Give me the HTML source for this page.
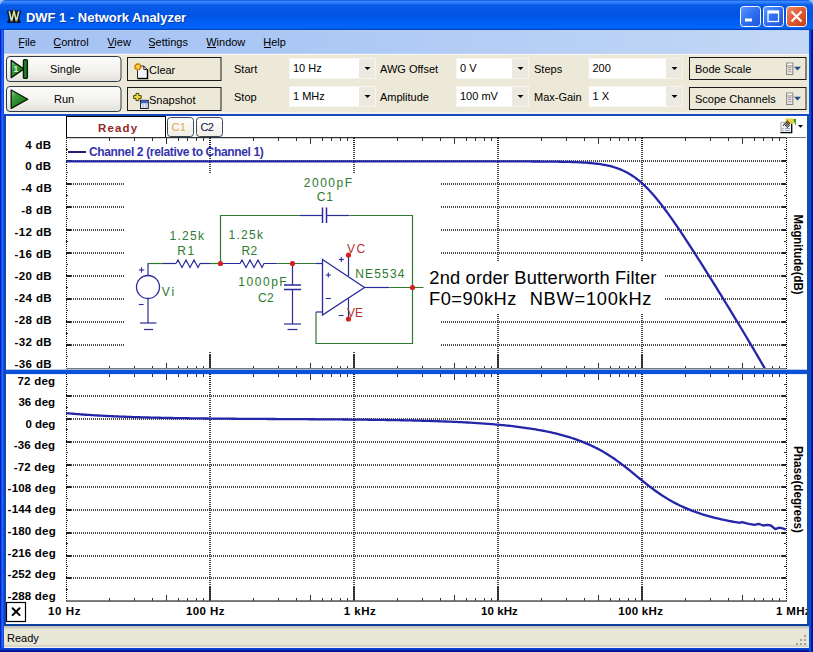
<!DOCTYPE html><html><head><meta charset="utf-8"><style>html,body{margin:0;padding:0;width:813px;height:652px;overflow:hidden;background:#fff}svg{display:block}text{font-family:"Liberation Sans",sans-serif}</style></head><body>
<svg width="813" height="652" viewBox="0 0 813 652">
<defs>
<linearGradient id="tb" x1="0" y1="0" x2="0" y2="30" gradientUnits="userSpaceOnUse">
<stop offset="0" stop-color="#0A46D0"/><stop offset="0.04" stop-color="#3A8EFF"/><stop offset="0.09" stop-color="#2B7CF8"/>
<stop offset="0.17" stop-color="#0A5AE8"/><stop offset="0.5" stop-color="#0054E3"/><stop offset="0.75" stop-color="#005EF4"/>
<stop offset="0.93" stop-color="#0066FA"/><stop offset="0.97" stop-color="#0050D8"/><stop offset="1" stop-color="#003CB8"/></linearGradient>
<linearGradient id="btnb" x1="0" y1="0" x2="1" y2="1"><stop offset="0" stop-color="#5A9AFF"/><stop offset="0.5" stop-color="#2F6FF0"/><stop offset="1" stop-color="#1A55DD"/></linearGradient>
<linearGradient id="btnr" x1="0" y1="0" x2="1" y2="1"><stop offset="0" stop-color="#EE8A6A"/><stop offset="0.5" stop-color="#DE5A34"/><stop offset="1" stop-color="#C23C14"/></linearGradient>
<linearGradient id="pb" x1="0" y1="0" x2="0" y2="1"><stop offset="0" stop-color="#FCFCFB"/><stop offset="0.6" stop-color="#F2F1EC"/><stop offset="1" stop-color="#E2E1DA"/></linearGradient>
<linearGradient id="cb" x1="0" y1="0" x2="0" y2="1"><stop offset="0" stop-color="#FFFFFF"/><stop offset="1" stop-color="#EEEDE6"/></linearGradient>
<linearGradient id="sb" x1="0" y1="626" x2="0" y2="648" gradientUnits="userSpaceOnUse"><stop offset="0" stop-color="#BCBCB4"/><stop offset="0.11" stop-color="#DAD8CA"/><stop offset="0.16" stop-color="#E8E6D6"/><stop offset="0.82" stop-color="#E9E7D8"/><stop offset="0.91" stop-color="#D8D4C4"/><stop offset="1" stop-color="#D8D4C4"/></linearGradient>
<linearGradient id="gr" x1="0" y1="0" x2="1" y2="1"><stop offset="0" stop-color="#9CC89C"/><stop offset="0.3" stop-color="#3A9A3A"/><stop offset="0.65" stop-color="#1C821C"/><stop offset="1" stop-color="#0E5A10"/></linearGradient>
</defs>
<rect x="0" y="0" width="813" height="652" fill="#0A3CCF"/>
<rect x="0" y="30" width="1" height="622" fill="#0020C0"/>
<rect x="1" y="30" width="1" height="622" fill="#1850F0"/>
<rect x="2" y="30" width="1" height="622" fill="#2A64FF"/>
<rect x="3" y="30" width="1" height="622" fill="#0A50D8"/>
<rect x="809" y="30" width="1" height="622" fill="#0A50E0"/>
<rect x="810" y="30" width="1" height="622" fill="#0A48D8"/>
<rect x="811" y="30" width="1" height="622" fill="#0020B0"/>
<rect x="812" y="30" width="1" height="622" fill="#0010A0"/>
<rect x="0" y="648" width="813" height="1" fill="#0C40D0"/>
<rect x="0" y="649" width="813" height="1" fill="#0C3CC8"/>
<rect x="0" y="650" width="813" height="1" fill="#001CA0"/>
<rect x="0" y="651" width="813" height="1" fill="#001490"/>
<rect x="0" y="0" width="813" height="30" fill="url(#tb)"/>
<path d="M0 0 H5 Q1 1 0 5 Z" fill="#9CC0F4"/>
<path d="M813 0 H808 Q812 1 813 5 Z" fill="#9CC0F4"/>
<path d="M9 10.6 L11.6 21.8 L14 10.4 L16.4 21.8 L19 10.6" fill="none" stroke="#0A1430" stroke-width="4.2" stroke-linejoin="miter" stroke-miterlimit="3"/>
<path d="M7 23 H21 L19.5 19 H8.5 Z" fill="#0A1430"/>
<path d="M12.2 12.5 L14 8.4 L15.8 12.5 Z" fill="#0A1430"/>
<path d="M9.2 11.2 L11.6 21.4 L14 11 L16.4 21.4 L18.8 11.2" fill="none" stroke="#D0E2A0" stroke-width="1.6" stroke-linejoin="miter"/>
<path d="M14 9.6 V12" stroke="#B8C890" stroke-width="1"/>
<path d="M10.5 20.5 L13 20.5 M15 20.5 L17.5 20.5" stroke="#6E7E5A" stroke-width="0.8"/>
<text x="26.90" y="22.6" font-size="13" font-weight="bold" fill="#0A1E6A" textLength="160.28" lengthAdjust="spacing" opacity="0.55">DWF 1 - Network Analyzer</text>
<text x="25.90" y="21.7" font-size="13" font-weight="bold" fill="#FFFFFF" textLength="160.28" lengthAdjust="spacing" >DWF 1 - Network Analyzer</text>
<rect x="740.5" y="6.5" width="20" height="20" rx="3" fill="url(#btnb)" stroke="#FFFFFF" stroke-width="1"/>
<rect x="745" y="18.5" width="7" height="3" fill="#FFFFFF"/>
<rect x="763.5" y="6.5" width="20" height="20" rx="3" fill="url(#btnb)" stroke="#FFFFFF" stroke-width="1"/>
<rect x="768" y="11" width="10.5" height="10.5" fill="none" stroke="#FFFFFF" stroke-width="1.3"/><rect x="768" y="11" width="10.5" height="2.5" fill="#FFFFFF"/>
<rect x="786.5" y="6.5" width="20" height="20" rx="3" fill="url(#btnr)" stroke="#FFFFFF" stroke-width="1"/>
<path d="M791.5 11.5 L801.5 21.5 M801.5 11.5 L791.5 21.5" stroke="#FFFFFF" stroke-width="2.2"/>
<linearGradient id="mb" x1="4" y1="0" x2="809" y2="0" gradientUnits="userSpaceOnUse"><stop offset="0" stop-color="#A6C2F2"/><stop offset="0.4" stop-color="#ACC8F5"/><stop offset="1" stop-color="#C4D8F6"/></linearGradient>
<rect x="4" y="30" width="805" height="24" fill="url(#mb)"/>
<rect x="4" y="30" width="805" height="1" fill="#B8D0F8" opacity="0.7"/>
<rect x="4" y="53" width="805" height="1" fill="#C8D4E8" opacity="0.7"/>
<text x="18.2" y="46" font-size="11" fill="#000">File</text>
<text x="53.2" y="46" font-size="11" fill="#000">Control</text>
<text x="107.2" y="46" font-size="11" fill="#000">View</text>
<text x="148.2" y="46" font-size="11" fill="#000">Settings</text>
<text x="206.2" y="46" font-size="11" fill="#000">Window</text>
<text x="263.2" y="46" font-size="11" fill="#000">Help</text>
<rect x="19" y="47" width="5" height="1" fill="#000"/>
<rect x="54" y="47" width="7" height="1" fill="#000"/>
<rect x="108" y="47" width="7" height="1" fill="#000"/>
<rect x="149" y="47" width="6" height="1" fill="#000"/>
<rect x="207" y="47" width="9" height="1" fill="#000"/>
<rect x="264" y="47" width="7" height="1" fill="#000"/>
<rect x="4" y="54" width="805" height="60" fill="#ECE9D8"/>
<rect x="4" y="54" width="805" height="1" fill="#F4F6F8"/>
<rect x="4" y="112" width="805" height="2" fill="#F2F2EE"/>
<rect x="4" y="54" width="2" height="60" fill="#F0F2F2"/>
<rect x="6.5" y="56.5" width="114.5" height="25" rx="3.5" fill="url(#pb)" stroke="#2E3A46" stroke-width="1"/>
<rect x="6.5" y="86.5" width="114.5" height="25" rx="3.5" fill="url(#pb)" stroke="#2E3A46" stroke-width="1"/>
<path d="M11.2 60.4 L24 69 L11.2 77.6 Z" fill="url(#gr)" stroke="#081808" stroke-width="1.3" stroke-linejoin="round"/>
<rect x="23.4" y="59.6" width="4" height="18.8" rx="1.2" fill="#1E7E22" stroke="#081808" stroke-width="1.3"/>
<text x="13.6" y="72.3" font-size="8.5" font-weight="bold" fill="#E4F0E0" font-family="Liberation Serif">1</text>
<path d="M11.2 90 L27.8 99.3 L11.2 108.4 Z" fill="url(#gr)" stroke="#081808" stroke-width="1.3" stroke-linejoin="round"/>
<text x="50" y="73" font-size="11" fill="#000">Single</text>
<text x="54" y="103" font-size="11" fill="#000">Run</text>
<rect x="127.5" y="57.5" width="93.5" height="23" fill="#ECE9D8" stroke="#1A1A1A" stroke-width="1"/>
<rect x="127.5" y="87.5" width="93.5" height="23" fill="#ECE9D8" stroke="#1A1A1A" stroke-width="1"/>
<path d="M137.5 66 H143.8 L147.3 69.5 V78.3 H137.5 Z" fill="#F2F2FA" stroke="#101010" stroke-width="0.9"/>
<path d="M147.6 69.5 V78.6 H137.6" fill="none" stroke="#000" stroke-width="1.3"/>
<path d="M143.8 66 V69.5 H147.3" fill="none" stroke="#101010" stroke-width="0.9"/>
<circle cx="137.9" cy="66.8" r="3.8" fill="#F4B830"/>
<circle cx="137.9" cy="66.8" r="2.9" fill="none" stroke="#8A4A10" stroke-width="1.1" stroke-dasharray="1.2 1.1"/>
<circle cx="137.9" cy="66.6" r="1.4" fill="#FFD860"/>
<text x="149" y="74" font-size="11" fill="#000">Clear</text>
<path d="M133.6 95.6 h2.4 v-2.2 h2.8 v2.2 h2.4 v2.8 h-2.4 v2.2 h-2.8 v-2.2 h-2.4 Z" fill="#F0E040" stroke="#3A3000" stroke-width="0.9"/>
<rect x="140.5" y="100.3" width="7.8" height="8.2" fill="#EAF2FE" stroke="#0A0A20" stroke-width="0.9"/>
<rect x="140.9" y="100.7" width="7" height="2.6" fill="#3A62C8"/>
<path d="M142.2 104.9 h2 M145.2 104.9 h2 M142.2 107 h2 M145.2 107 h2" stroke="#8090B8" stroke-width="0.8"/>
<text x="149" y="103.5" font-size="11" fill="#000">Snapshot</text>
<text x="234" y="73" font-size="11" fill="#000">Start</text>
<text x="234" y="101" font-size="11" fill="#000">Stop</text>
<text x="380" y="73" font-size="11" fill="#000">AWG Offset</text>
<text x="380" y="101" font-size="11" fill="#000">Amplitude</text>
<text x="534" y="73" font-size="11" fill="#000">Steps</text>
<text x="534" y="101" font-size="11" fill="#000">Max-Gain</text>
<rect x="289" y="58" width="87" height="21" fill="#F6F5EF"/>
<rect x="290" y="59" width="69" height="19" fill="#FFFFFF"/>
<rect x="359" y="59" width="16" height="19" fill="#ECEAE0"/>
<path d="M364.5 67.0 h6 l-3 3 Z" fill="#000"/>
<text x="293" y="72" font-size="11" fill="#000">10 Hz</text>
<rect x="289" y="86" width="87" height="21" fill="#F6F5EF"/>
<rect x="290" y="87" width="69" height="19" fill="#FFFFFF"/>
<rect x="359" y="87" width="16" height="19" fill="#ECEAE0"/>
<path d="M364.5 95.0 h6 l-3 3 Z" fill="#000"/>
<text x="293" y="100" font-size="11" fill="#000">1 MHz</text>
<rect x="456" y="58" width="73" height="21" fill="#F6F5EF"/>
<rect x="457" y="59" width="55" height="19" fill="#FFFFFF"/>
<rect x="512" y="59" width="16" height="19" fill="#ECEAE0"/>
<path d="M517.5 67.0 h6 l-3 3 Z" fill="#000"/>
<text x="460" y="72" font-size="11" fill="#000">0 V</text>
<rect x="456" y="86" width="73" height="21" fill="#F6F5EF"/>
<rect x="457" y="87" width="55" height="19" fill="#FFFFFF"/>
<rect x="512" y="87" width="16" height="19" fill="#ECEAE0"/>
<path d="M517.5 95.0 h6 l-3 3 Z" fill="#000"/>
<text x="460" y="100" font-size="11" fill="#000">100 mV</text>
<rect x="588.5" y="58" width="94.5" height="21" fill="#F6F5EF"/>
<rect x="589.5" y="59" width="76.5" height="19" fill="#FFFFFF"/>
<rect x="666" y="59" width="16" height="19" fill="#ECEAE0"/>
<path d="M671.5 67.0 h6 l-3 3 Z" fill="#000"/>
<text x="592.5" y="72" font-size="11" fill="#000">200</text>
<rect x="588.5" y="86" width="94.5" height="21" fill="#F6F5EF"/>
<rect x="589.5" y="87" width="76.5" height="19" fill="#FFFFFF"/>
<rect x="666" y="87" width="16" height="19" fill="#ECEAE0"/>
<path d="M671.5 95.0 h6 l-3 3 Z" fill="#000"/>
<text x="592.5" y="100" font-size="11" fill="#000">1 X</text>
<rect x="689.5" y="57.5" width="116.5" height="22" fill="#ECE9D8" stroke="#1A1A1A" stroke-width="1"/>
<text x="695" y="72.5" font-size="11" fill="#000">Bode Scale</text>
<rect x="786.6" y="63.1" width="6.2" height="11.4" fill="#F0EEF4" stroke="#8C8A80" stroke-width="1.1"/>
<rect x="787.2" y="63.7" width="5" height="1.8" fill="#FFFFFF"/>
<path d="M786.6 65.9 h6.2" stroke="#8C8A80" stroke-width="0.9"/>
<path d="M788 67.7 h3.4 M788 69.7 h3.4 M788 71.8 h3.4" stroke="#8C8A80" stroke-width="0.9"/>
<path d="M794 66.7 h7 l-3.5 3.8 Z" fill="#1E4A8C"/>
<rect x="689.5" y="87.5" width="116.5" height="22" fill="#ECE9D8" stroke="#1A1A1A" stroke-width="1"/>
<text x="695" y="102.5" font-size="11" fill="#000">Scope Channels</text>
<rect x="786.6" y="93.1" width="6.2" height="11.4" fill="#F0EEF4" stroke="#8C8A80" stroke-width="1.1"/>
<rect x="787.2" y="93.7" width="5" height="1.8" fill="#FFFFFF"/>
<path d="M786.6 95.9 h6.2" stroke="#8C8A80" stroke-width="0.9"/>
<path d="M788 97.7 h3.4 M788 99.7 h3.4 M788 101.8 h3.4" stroke="#8C8A80" stroke-width="0.9"/>
<path d="M794 96.7 h7 l-3.5 3.8 Z" fill="#1E4A8C"/>
<rect x="4" y="114" width="805" height="512" fill="#1848C0"/>
<rect x="6" y="116" width="801" height="508" fill="#FFFFFF"/>
<rect x="4" y="114" width="1" height="512" fill="#0A48C8"/>
<rect x="5" y="116" width="1" height="508" fill="#1A48A0"/>
<rect x="66.5" y="116.5" width="99" height="21" fill="#FFFFFF" stroke="#000" stroke-width="1"/>
<text x="97.90" y="132" font-size="11.5" font-weight="bold" fill="#922828" textLength="39.31" lengthAdjust="spacing" >Ready</text>
<rect x="167.5" y="117.5" width="26.0" height="19" rx="3" fill="url(#cb)" stroke="#3A4A5A" stroke-width="1"/>
<text x="171.50" y="130.8" font-size="11" fill="#D8A850" textLength="14.34" lengthAdjust="spacing" >C1</text>
<rect x="196.5" y="117.5" width="26.0" height="19" rx="3" fill="url(#cb)" stroke="#3A4A5A" stroke-width="1"/>
<text x="200.50" y="130.8" font-size="11" fill="#101048" textLength="13.34" lengthAdjust="spacing" >C2</text>
<rect x="780.5" y="122" width="11.2" height="10.5" fill="#F0F4FC"/>
<path d="M780.9 132.5 V122.4 H791.5" fill="none" stroke="#A8A8A8" stroke-width="0.9"/>
<path d="M791.7 122.2 V132.6 H780.5" fill="none" stroke="#000" stroke-width="1.3"/>
<path d="M781.6 128.6 h2 M785 128.6 h5 M781.6 130.6 h2 M785 130.6 h5" stroke="#8C98B0" stroke-width="0.9"/>
<path d="M785.5 118.6 Q790 117.4 794.2 119.3 L793.8 123.6 Q789 125 785.5 122.5 Z" fill="#E4CC38" opacity="0.9"/>
<path d="M793.2 119.3 L796 118.8 L795.8 126 Z" fill="#2A9A2A"/>
<rect x="786.85" y="120.65" width="1.1" height="1.1" fill="#101010"/>
<rect x="785.85" y="121.65" width="1.1" height="1.1" fill="#101010"/>
<rect x="787.85" y="121.65" width="1.1" height="1.1" fill="#101010"/>
<rect x="784.85" y="122.65" width="1.1" height="1.1" fill="#101010"/>
<rect x="786.85" y="122.65" width="1.1" height="1.1" fill="#101010"/>
<rect x="788.85" y="122.65" width="1.1" height="1.1" fill="#101010"/>
<rect x="783.85" y="123.65" width="1.1" height="1.1" fill="#101010"/>
<rect x="785.85" y="123.65" width="1.1" height="1.1" fill="#101010"/>
<rect x="787.85" y="123.65" width="1.1" height="1.1" fill="#101010"/>
<rect x="782.85" y="124.65" width="1.1" height="1.1" fill="#101010"/>
<rect x="784.85" y="124.65" width="1.1" height="1.1" fill="#101010"/>
<rect x="786.85" y="124.65" width="1.1" height="1.1" fill="#101010"/>
<rect x="788.85" y="124.65" width="1.1" height="1.1" fill="#101010"/>
<rect x="785.85" y="125.65" width="1.1" height="1.1" fill="#101010"/>
<rect x="787.85" y="125.65" width="1.1" height="1.1" fill="#101010"/>
<rect x="786.85" y="126.65" width="1.1" height="1.1" fill="#101010"/>
<path d="M798 125.1 h5 l-2.5 2.7 Z" fill="#000"/>
<rect x="780" y="137" width="26" height="1" fill="#707070"/>
<text x="25.20" y="149" font-size="11.5" font-weight="bold" fill="#000" textLength="25.90" lengthAdjust="spacing" >4 dB</text>
<text x="25.30" y="170" font-size="11.5" font-weight="bold" fill="#000" textLength="25.80" lengthAdjust="spacing" >0 dB</text>
<text x="21.20" y="192" font-size="11.5" font-weight="bold" fill="#000" textLength="30.73" lengthAdjust="spacing" >-4 dB</text>
<text x="21.20" y="214" font-size="11.5" font-weight="bold" fill="#000" textLength="30.73" lengthAdjust="spacing" >-8 dB</text>
<text x="14.40" y="236" font-size="11.5" font-weight="bold" fill="#000" textLength="37.28" lengthAdjust="spacing" >-12 dB</text>
<text x="14.40" y="258" font-size="11.5" font-weight="bold" fill="#000" textLength="37.28" lengthAdjust="spacing" >-16 dB</text>
<text x="14.40" y="280" font-size="11.5" font-weight="bold" fill="#000" textLength="37.28" lengthAdjust="spacing" >-20 dB</text>
<text x="14.40" y="302" font-size="11.5" font-weight="bold" fill="#000" textLength="37.28" lengthAdjust="spacing" >-24 dB</text>
<text x="14.40" y="324" font-size="11.5" font-weight="bold" fill="#000" textLength="37.28" lengthAdjust="spacing" >-28 dB</text>
<text x="14.40" y="346" font-size="11.5" font-weight="bold" fill="#000" textLength="37.28" lengthAdjust="spacing" >-32 dB</text>
<text x="14.40" y="368" font-size="11.5" font-weight="bold" fill="#000" textLength="37.28" lengthAdjust="spacing" >-36 dB</text>
<text x="17.40" y="385" font-size="11.5" font-weight="bold" fill="#000" textLength="37.73" lengthAdjust="spacing" >72 deg</text>
<text x="18.40" y="406" font-size="11.5" font-weight="bold" fill="#000" textLength="36.73" lengthAdjust="spacing" >36 deg</text>
<text x="25.40" y="428" font-size="11.5" font-weight="bold" fill="#000" textLength="29.98" lengthAdjust="spacing" >0 deg</text>
<text x="13.80" y="449" font-size="11.5" font-weight="bold" fill="#000" textLength="41.17" lengthAdjust="spacing" >-36 deg</text>
<text x="13.80" y="471" font-size="11.5" font-weight="bold" fill="#000" textLength="41.17" lengthAdjust="spacing" >-72 deg</text>
<text x="7.60" y="492" font-size="11.5" font-weight="bold" fill="#000" textLength="48.12" lengthAdjust="spacing" >-108 deg</text>
<text x="7.60" y="513" font-size="11.5" font-weight="bold" fill="#000" textLength="48.12" lengthAdjust="spacing" >-144 deg</text>
<text x="7.60" y="535" font-size="11.5" font-weight="bold" fill="#000" textLength="48.12" lengthAdjust="spacing" >-180 deg</text>
<text x="7.60" y="557" font-size="11.5" font-weight="bold" fill="#000" textLength="48.12" lengthAdjust="spacing" >-216 deg</text>
<text x="7.60" y="578" font-size="11.5" font-weight="bold" fill="#000" textLength="48.12" lengthAdjust="spacing" >-252 deg</text>
<text x="7.60" y="600" font-size="11.5" font-weight="bold" fill="#000" textLength="48.12" lengthAdjust="spacing" >-288 deg</text>
<text x="48.00" y="615" font-size="11.5" font-weight="bold" fill="#000" textLength="32.44" lengthAdjust="spacing" >10 Hz</text>
<text x="185.90" y="615" font-size="11.5" font-weight="bold" fill="#000" textLength="38.59" lengthAdjust="spacing" >100 Hz</text>
<text x="343.80" y="615" font-size="11.5" font-weight="bold" fill="#000" textLength="31.88" lengthAdjust="spacing" >1 kHz</text>
<text x="481.00" y="615" font-size="11.5" font-weight="bold" fill="#000" textLength="36.83" lengthAdjust="spacing" >10 kHz</text>
<text x="618.30" y="615" font-size="11.5" font-weight="bold" fill="#000" textLength="44.58" lengthAdjust="spacing" >100 kHz</text>
<text x="776.00" y="615" font-size="11.5" font-weight="bold" fill="#000" textLength="34.53" lengthAdjust="spacing" >1 MHz</text>
<g shape-rendering="crispEdges">
<line x1="67" y1="161" x2="786" y2="161" stroke="#4A4A4A" stroke-width="2" stroke-dasharray="1 1"/>
<line x1="66" y1="161" x2="71" y2="161" stroke="#202020" stroke-width="2"/>
<line x1="782" y1="161" x2="786" y2="161" stroke="#202020" stroke-width="2"/>
<line x1="67" y1="184" x2="786" y2="184" stroke="#4A4A4A" stroke-width="2" stroke-dasharray="1 1"/>
<line x1="66" y1="184" x2="71" y2="184" stroke="#202020" stroke-width="2"/>
<line x1="782" y1="184" x2="786" y2="184" stroke="#202020" stroke-width="2"/>
<line x1="67" y1="207" x2="786" y2="207" stroke="#4A4A4A" stroke-width="2" stroke-dasharray="1 1"/>
<line x1="66" y1="207" x2="71" y2="207" stroke="#202020" stroke-width="2"/>
<line x1="782" y1="207" x2="786" y2="207" stroke="#202020" stroke-width="2"/>
<line x1="67" y1="230" x2="786" y2="230" stroke="#4A4A4A" stroke-width="2" stroke-dasharray="1 1"/>
<line x1="66" y1="230" x2="71" y2="230" stroke="#202020" stroke-width="2"/>
<line x1="782" y1="230" x2="786" y2="230" stroke="#202020" stroke-width="2"/>
<line x1="67" y1="253" x2="786" y2="253" stroke="#4A4A4A" stroke-width="2" stroke-dasharray="1 1"/>
<line x1="66" y1="253" x2="71" y2="253" stroke="#202020" stroke-width="2"/>
<line x1="782" y1="253" x2="786" y2="253" stroke="#202020" stroke-width="2"/>
<line x1="67" y1="276" x2="786" y2="276" stroke="#4A4A4A" stroke-width="2" stroke-dasharray="1 1"/>
<line x1="66" y1="276" x2="71" y2="276" stroke="#202020" stroke-width="2"/>
<line x1="782" y1="276" x2="786" y2="276" stroke="#202020" stroke-width="2"/>
<line x1="67" y1="299" x2="786" y2="299" stroke="#4A4A4A" stroke-width="2" stroke-dasharray="1 1"/>
<line x1="66" y1="299" x2="71" y2="299" stroke="#202020" stroke-width="2"/>
<line x1="782" y1="299" x2="786" y2="299" stroke="#202020" stroke-width="2"/>
<line x1="67" y1="322" x2="786" y2="322" stroke="#4A4A4A" stroke-width="2" stroke-dasharray="1 1"/>
<line x1="66" y1="322" x2="71" y2="322" stroke="#202020" stroke-width="2"/>
<line x1="782" y1="322" x2="786" y2="322" stroke="#202020" stroke-width="2"/>
<line x1="67" y1="345" x2="786" y2="345" stroke="#4A4A4A" stroke-width="2" stroke-dasharray="1 1"/>
<line x1="66" y1="345" x2="71" y2="345" stroke="#202020" stroke-width="2"/>
<line x1="782" y1="345" x2="786" y2="345" stroke="#202020" stroke-width="2"/>
<line x1="210" y1="137.5" x2="210" y2="368.5" stroke="#4A4A4A" stroke-width="2" stroke-dasharray="1 1"/>
<line x1="210" y1="137.5" x2="210" y2="149.5" stroke="#202020" stroke-width="2" stroke-dasharray="1 1"/>
<line x1="210" y1="354.5" x2="210" y2="368.5" stroke="#202020" stroke-width="2" stroke-dasharray="1 1"/>
<line x1="354" y1="137.5" x2="354" y2="368.5" stroke="#4A4A4A" stroke-width="2" stroke-dasharray="1 1"/>
<line x1="354" y1="137.5" x2="354" y2="149.5" stroke="#202020" stroke-width="2" stroke-dasharray="1 1"/>
<line x1="354" y1="354.5" x2="354" y2="368.5" stroke="#202020" stroke-width="2" stroke-dasharray="1 1"/>
<line x1="498" y1="137.5" x2="498" y2="368.5" stroke="#4A4A4A" stroke-width="2" stroke-dasharray="1 1"/>
<line x1="498" y1="137.5" x2="498" y2="149.5" stroke="#202020" stroke-width="2" stroke-dasharray="1 1"/>
<line x1="498" y1="354.5" x2="498" y2="368.5" stroke="#202020" stroke-width="2" stroke-dasharray="1 1"/>
<line x1="642" y1="137.5" x2="642" y2="368.5" stroke="#4A4A4A" stroke-width="2" stroke-dasharray="1 1"/>
<line x1="642" y1="137.5" x2="642" y2="149.5" stroke="#202020" stroke-width="2" stroke-dasharray="1 1"/>
<line x1="642" y1="354.5" x2="642" y2="368.5" stroke="#202020" stroke-width="2" stroke-dasharray="1 1"/>
<line x1="66.5" y1="137.5" x2="66.5" y2="368.5" stroke="#000" stroke-width="1" stroke-dasharray="1 1"/>
<line x1="786.5" y1="137.5" x2="786.5" y2="368.5" stroke="#000" stroke-width="1" stroke-dasharray="1 1"/>
<line x1="109.5" y1="137.5" x2="109.5" y2="140.5" stroke="#333" stroke-width="1"/>
<line x1="109.5" y1="365.5" x2="109.5" y2="368.5" stroke="#333" stroke-width="1"/>
<line x1="134.5" y1="137.5" x2="134.5" y2="140.5" stroke="#333" stroke-width="1"/>
<line x1="134.5" y1="365.5" x2="134.5" y2="368.5" stroke="#333" stroke-width="1"/>
<line x1="152.5" y1="137.5" x2="152.5" y2="140.5" stroke="#333" stroke-width="1"/>
<line x1="152.5" y1="365.5" x2="152.5" y2="368.5" stroke="#333" stroke-width="1"/>
<line x1="166.5" y1="137.5" x2="166.5" y2="143.5" stroke="#333" stroke-width="1"/>
<line x1="166.5" y1="362.5" x2="166.5" y2="368.5" stroke="#333" stroke-width="1"/>
<line x1="178.5" y1="137.5" x2="178.5" y2="140.5" stroke="#333" stroke-width="1"/>
<line x1="178.5" y1="365.5" x2="178.5" y2="368.5" stroke="#333" stroke-width="1"/>
<line x1="187.5" y1="137.5" x2="187.5" y2="140.5" stroke="#333" stroke-width="1"/>
<line x1="187.5" y1="365.5" x2="187.5" y2="368.5" stroke="#333" stroke-width="1"/>
<line x1="196.5" y1="137.5" x2="196.5" y2="140.5" stroke="#333" stroke-width="1"/>
<line x1="196.5" y1="365.5" x2="196.5" y2="368.5" stroke="#333" stroke-width="1"/>
<line x1="203.5" y1="137.5" x2="203.5" y2="140.5" stroke="#333" stroke-width="1"/>
<line x1="203.5" y1="365.5" x2="203.5" y2="368.5" stroke="#333" stroke-width="1"/>
<line x1="253.5" y1="137.5" x2="253.5" y2="140.5" stroke="#333" stroke-width="1"/>
<line x1="253.5" y1="365.5" x2="253.5" y2="368.5" stroke="#333" stroke-width="1"/>
<line x1="278.5" y1="137.5" x2="278.5" y2="140.5" stroke="#333" stroke-width="1"/>
<line x1="278.5" y1="365.5" x2="278.5" y2="368.5" stroke="#333" stroke-width="1"/>
<line x1="296.5" y1="137.5" x2="296.5" y2="140.5" stroke="#333" stroke-width="1"/>
<line x1="296.5" y1="365.5" x2="296.5" y2="368.5" stroke="#333" stroke-width="1"/>
<line x1="310.5" y1="137.5" x2="310.5" y2="143.5" stroke="#333" stroke-width="1"/>
<line x1="310.5" y1="362.5" x2="310.5" y2="368.5" stroke="#333" stroke-width="1"/>
<line x1="322.5" y1="137.5" x2="322.5" y2="140.5" stroke="#333" stroke-width="1"/>
<line x1="322.5" y1="365.5" x2="322.5" y2="368.5" stroke="#333" stroke-width="1"/>
<line x1="331.5" y1="137.5" x2="331.5" y2="140.5" stroke="#333" stroke-width="1"/>
<line x1="331.5" y1="365.5" x2="331.5" y2="368.5" stroke="#333" stroke-width="1"/>
<line x1="340.5" y1="137.5" x2="340.5" y2="140.5" stroke="#333" stroke-width="1"/>
<line x1="340.5" y1="365.5" x2="340.5" y2="368.5" stroke="#333" stroke-width="1"/>
<line x1="347.5" y1="137.5" x2="347.5" y2="140.5" stroke="#333" stroke-width="1"/>
<line x1="347.5" y1="365.5" x2="347.5" y2="368.5" stroke="#333" stroke-width="1"/>
<line x1="397.5" y1="137.5" x2="397.5" y2="140.5" stroke="#333" stroke-width="1"/>
<line x1="397.5" y1="365.5" x2="397.5" y2="368.5" stroke="#333" stroke-width="1"/>
<line x1="422.5" y1="137.5" x2="422.5" y2="140.5" stroke="#333" stroke-width="1"/>
<line x1="422.5" y1="365.5" x2="422.5" y2="368.5" stroke="#333" stroke-width="1"/>
<line x1="440.5" y1="137.5" x2="440.5" y2="140.5" stroke="#333" stroke-width="1"/>
<line x1="440.5" y1="365.5" x2="440.5" y2="368.5" stroke="#333" stroke-width="1"/>
<line x1="454.5" y1="137.5" x2="454.5" y2="143.5" stroke="#333" stroke-width="1"/>
<line x1="454.5" y1="362.5" x2="454.5" y2="368.5" stroke="#333" stroke-width="1"/>
<line x1="466.5" y1="137.5" x2="466.5" y2="140.5" stroke="#333" stroke-width="1"/>
<line x1="466.5" y1="365.5" x2="466.5" y2="368.5" stroke="#333" stroke-width="1"/>
<line x1="475.5" y1="137.5" x2="475.5" y2="140.5" stroke="#333" stroke-width="1"/>
<line x1="475.5" y1="365.5" x2="475.5" y2="368.5" stroke="#333" stroke-width="1"/>
<line x1="484.5" y1="137.5" x2="484.5" y2="140.5" stroke="#333" stroke-width="1"/>
<line x1="484.5" y1="365.5" x2="484.5" y2="368.5" stroke="#333" stroke-width="1"/>
<line x1="491.5" y1="137.5" x2="491.5" y2="140.5" stroke="#333" stroke-width="1"/>
<line x1="491.5" y1="365.5" x2="491.5" y2="368.5" stroke="#333" stroke-width="1"/>
<line x1="541.5" y1="137.5" x2="541.5" y2="140.5" stroke="#333" stroke-width="1"/>
<line x1="541.5" y1="365.5" x2="541.5" y2="368.5" stroke="#333" stroke-width="1"/>
<line x1="566.5" y1="137.5" x2="566.5" y2="140.5" stroke="#333" stroke-width="1"/>
<line x1="566.5" y1="365.5" x2="566.5" y2="368.5" stroke="#333" stroke-width="1"/>
<line x1="584.5" y1="137.5" x2="584.5" y2="140.5" stroke="#333" stroke-width="1"/>
<line x1="584.5" y1="365.5" x2="584.5" y2="368.5" stroke="#333" stroke-width="1"/>
<line x1="598.5" y1="137.5" x2="598.5" y2="143.5" stroke="#333" stroke-width="1"/>
<line x1="598.5" y1="362.5" x2="598.5" y2="368.5" stroke="#333" stroke-width="1"/>
<line x1="610.5" y1="137.5" x2="610.5" y2="140.5" stroke="#333" stroke-width="1"/>
<line x1="610.5" y1="365.5" x2="610.5" y2="368.5" stroke="#333" stroke-width="1"/>
<line x1="619.5" y1="137.5" x2="619.5" y2="140.5" stroke="#333" stroke-width="1"/>
<line x1="619.5" y1="365.5" x2="619.5" y2="368.5" stroke="#333" stroke-width="1"/>
<line x1="628.5" y1="137.5" x2="628.5" y2="140.5" stroke="#333" stroke-width="1"/>
<line x1="628.5" y1="365.5" x2="628.5" y2="368.5" stroke="#333" stroke-width="1"/>
<line x1="635.5" y1="137.5" x2="635.5" y2="140.5" stroke="#333" stroke-width="1"/>
<line x1="635.5" y1="365.5" x2="635.5" y2="368.5" stroke="#333" stroke-width="1"/>
<line x1="685.5" y1="137.5" x2="685.5" y2="140.5" stroke="#333" stroke-width="1"/>
<line x1="685.5" y1="365.5" x2="685.5" y2="368.5" stroke="#333" stroke-width="1"/>
<line x1="710.5" y1="137.5" x2="710.5" y2="140.5" stroke="#333" stroke-width="1"/>
<line x1="710.5" y1="365.5" x2="710.5" y2="368.5" stroke="#333" stroke-width="1"/>
<line x1="728.5" y1="137.5" x2="728.5" y2="140.5" stroke="#333" stroke-width="1"/>
<line x1="728.5" y1="365.5" x2="728.5" y2="368.5" stroke="#333" stroke-width="1"/>
<line x1="742.5" y1="137.5" x2="742.5" y2="143.5" stroke="#333" stroke-width="1"/>
<line x1="742.5" y1="362.5" x2="742.5" y2="368.5" stroke="#333" stroke-width="1"/>
<line x1="754.5" y1="137.5" x2="754.5" y2="140.5" stroke="#333" stroke-width="1"/>
<line x1="754.5" y1="365.5" x2="754.5" y2="368.5" stroke="#333" stroke-width="1"/>
<line x1="763.5" y1="137.5" x2="763.5" y2="140.5" stroke="#333" stroke-width="1"/>
<line x1="763.5" y1="365.5" x2="763.5" y2="368.5" stroke="#333" stroke-width="1"/>
<line x1="772.5" y1="137.5" x2="772.5" y2="140.5" stroke="#333" stroke-width="1"/>
<line x1="772.5" y1="365.5" x2="772.5" y2="368.5" stroke="#333" stroke-width="1"/>
<line x1="779.5" y1="137.5" x2="779.5" y2="140.5" stroke="#333" stroke-width="1"/>
<line x1="779.5" y1="365.5" x2="779.5" y2="368.5" stroke="#333" stroke-width="1"/>
<line x1="66" y1="149.5" x2="68" y2="149.5" stroke="#333" stroke-width="1"/>
<line x1="784" y1="149.5" x2="786" y2="149.5" stroke="#333" stroke-width="1"/>
<line x1="66" y1="172.5" x2="68" y2="172.5" stroke="#333" stroke-width="1"/>
<line x1="784" y1="172.5" x2="786" y2="172.5" stroke="#333" stroke-width="1"/>
<line x1="66" y1="195.5" x2="68" y2="195.5" stroke="#333" stroke-width="1"/>
<line x1="784" y1="195.5" x2="786" y2="195.5" stroke="#333" stroke-width="1"/>
<line x1="66" y1="218.5" x2="68" y2="218.5" stroke="#333" stroke-width="1"/>
<line x1="784" y1="218.5" x2="786" y2="218.5" stroke="#333" stroke-width="1"/>
<line x1="66" y1="241.5" x2="68" y2="241.5" stroke="#333" stroke-width="1"/>
<line x1="784" y1="241.5" x2="786" y2="241.5" stroke="#333" stroke-width="1"/>
<line x1="66" y1="264.5" x2="68" y2="264.5" stroke="#333" stroke-width="1"/>
<line x1="784" y1="264.5" x2="786" y2="264.5" stroke="#333" stroke-width="1"/>
<line x1="66" y1="287.5" x2="68" y2="287.5" stroke="#333" stroke-width="1"/>
<line x1="784" y1="287.5" x2="786" y2="287.5" stroke="#333" stroke-width="1"/>
<line x1="66" y1="310.5" x2="68" y2="310.5" stroke="#333" stroke-width="1"/>
<line x1="784" y1="310.5" x2="786" y2="310.5" stroke="#333" stroke-width="1"/>
<line x1="66" y1="333.5" x2="68" y2="333.5" stroke="#333" stroke-width="1"/>
<line x1="784" y1="333.5" x2="786" y2="333.5" stroke="#333" stroke-width="1"/>
<line x1="66" y1="356.5" x2="68" y2="356.5" stroke="#333" stroke-width="1"/>
<line x1="784" y1="356.5" x2="786" y2="356.5" stroke="#333" stroke-width="1"/>
</g>
<g shape-rendering="crispEdges">
<line x1="67" y1="396" x2="786" y2="396" stroke="#4A4A4A" stroke-width="2" stroke-dasharray="1 1"/>
<line x1="66" y1="396" x2="71" y2="396" stroke="#202020" stroke-width="2"/>
<line x1="782" y1="396" x2="786" y2="396" stroke="#202020" stroke-width="2"/>
<line x1="67" y1="419" x2="786" y2="419" stroke="#4A4A4A" stroke-width="2" stroke-dasharray="1 1"/>
<line x1="66" y1="419" x2="71" y2="419" stroke="#202020" stroke-width="2"/>
<line x1="782" y1="419" x2="786" y2="419" stroke="#202020" stroke-width="2"/>
<line x1="67" y1="442" x2="786" y2="442" stroke="#4A4A4A" stroke-width="2" stroke-dasharray="1 1"/>
<line x1="66" y1="442" x2="71" y2="442" stroke="#202020" stroke-width="2"/>
<line x1="782" y1="442" x2="786" y2="442" stroke="#202020" stroke-width="2"/>
<line x1="67" y1="465" x2="786" y2="465" stroke="#4A4A4A" stroke-width="2" stroke-dasharray="1 1"/>
<line x1="66" y1="465" x2="71" y2="465" stroke="#202020" stroke-width="2"/>
<line x1="782" y1="465" x2="786" y2="465" stroke="#202020" stroke-width="2"/>
<line x1="67" y1="487" x2="786" y2="487" stroke="#4A4A4A" stroke-width="2" stroke-dasharray="1 1"/>
<line x1="66" y1="487" x2="71" y2="487" stroke="#202020" stroke-width="2"/>
<line x1="782" y1="487" x2="786" y2="487" stroke="#202020" stroke-width="2"/>
<line x1="67" y1="510" x2="786" y2="510" stroke="#4A4A4A" stroke-width="2" stroke-dasharray="1 1"/>
<line x1="66" y1="510" x2="71" y2="510" stroke="#202020" stroke-width="2"/>
<line x1="782" y1="510" x2="786" y2="510" stroke="#202020" stroke-width="2"/>
<line x1="67" y1="533" x2="786" y2="533" stroke="#4A4A4A" stroke-width="2" stroke-dasharray="1 1"/>
<line x1="66" y1="533" x2="71" y2="533" stroke="#202020" stroke-width="2"/>
<line x1="782" y1="533" x2="786" y2="533" stroke="#202020" stroke-width="2"/>
<line x1="67" y1="556" x2="786" y2="556" stroke="#4A4A4A" stroke-width="2" stroke-dasharray="1 1"/>
<line x1="66" y1="556" x2="71" y2="556" stroke="#202020" stroke-width="2"/>
<line x1="782" y1="556" x2="786" y2="556" stroke="#202020" stroke-width="2"/>
<line x1="67" y1="578" x2="786" y2="578" stroke="#4A4A4A" stroke-width="2" stroke-dasharray="1 1"/>
<line x1="66" y1="578" x2="71" y2="578" stroke="#202020" stroke-width="2"/>
<line x1="782" y1="578" x2="786" y2="578" stroke="#202020" stroke-width="2"/>
<line x1="210" y1="374" x2="210" y2="601" stroke="#4A4A4A" stroke-width="2" stroke-dasharray="1 1"/>
<line x1="210" y1="374" x2="210" y2="386" stroke="#202020" stroke-width="2" stroke-dasharray="1 1"/>
<line x1="210" y1="587" x2="210" y2="601" stroke="#202020" stroke-width="2" stroke-dasharray="1 1"/>
<line x1="354" y1="374" x2="354" y2="601" stroke="#4A4A4A" stroke-width="2" stroke-dasharray="1 1"/>
<line x1="354" y1="374" x2="354" y2="386" stroke="#202020" stroke-width="2" stroke-dasharray="1 1"/>
<line x1="354" y1="587" x2="354" y2="601" stroke="#202020" stroke-width="2" stroke-dasharray="1 1"/>
<line x1="498" y1="374" x2="498" y2="601" stroke="#4A4A4A" stroke-width="2" stroke-dasharray="1 1"/>
<line x1="498" y1="374" x2="498" y2="386" stroke="#202020" stroke-width="2" stroke-dasharray="1 1"/>
<line x1="498" y1="587" x2="498" y2="601" stroke="#202020" stroke-width="2" stroke-dasharray="1 1"/>
<line x1="642" y1="374" x2="642" y2="601" stroke="#4A4A4A" stroke-width="2" stroke-dasharray="1 1"/>
<line x1="642" y1="374" x2="642" y2="386" stroke="#202020" stroke-width="2" stroke-dasharray="1 1"/>
<line x1="642" y1="587" x2="642" y2="601" stroke="#202020" stroke-width="2" stroke-dasharray="1 1"/>
<line x1="66.5" y1="374" x2="66.5" y2="601" stroke="#000" stroke-width="1" stroke-dasharray="1 1"/>
<line x1="786.5" y1="374" x2="786.5" y2="601" stroke="#000" stroke-width="1" stroke-dasharray="1 1"/>
<line x1="109.5" y1="374" x2="109.5" y2="377" stroke="#333" stroke-width="1"/>
<line x1="109.5" y1="598" x2="109.5" y2="601" stroke="#333" stroke-width="1"/>
<line x1="134.5" y1="374" x2="134.5" y2="377" stroke="#333" stroke-width="1"/>
<line x1="134.5" y1="598" x2="134.5" y2="601" stroke="#333" stroke-width="1"/>
<line x1="152.5" y1="374" x2="152.5" y2="377" stroke="#333" stroke-width="1"/>
<line x1="152.5" y1="598" x2="152.5" y2="601" stroke="#333" stroke-width="1"/>
<line x1="166.5" y1="374" x2="166.5" y2="380" stroke="#333" stroke-width="1"/>
<line x1="166.5" y1="595" x2="166.5" y2="601" stroke="#333" stroke-width="1"/>
<line x1="178.5" y1="374" x2="178.5" y2="377" stroke="#333" stroke-width="1"/>
<line x1="178.5" y1="598" x2="178.5" y2="601" stroke="#333" stroke-width="1"/>
<line x1="187.5" y1="374" x2="187.5" y2="377" stroke="#333" stroke-width="1"/>
<line x1="187.5" y1="598" x2="187.5" y2="601" stroke="#333" stroke-width="1"/>
<line x1="196.5" y1="374" x2="196.5" y2="377" stroke="#333" stroke-width="1"/>
<line x1="196.5" y1="598" x2="196.5" y2="601" stroke="#333" stroke-width="1"/>
<line x1="203.5" y1="374" x2="203.5" y2="377" stroke="#333" stroke-width="1"/>
<line x1="203.5" y1="598" x2="203.5" y2="601" stroke="#333" stroke-width="1"/>
<line x1="253.5" y1="374" x2="253.5" y2="377" stroke="#333" stroke-width="1"/>
<line x1="253.5" y1="598" x2="253.5" y2="601" stroke="#333" stroke-width="1"/>
<line x1="278.5" y1="374" x2="278.5" y2="377" stroke="#333" stroke-width="1"/>
<line x1="278.5" y1="598" x2="278.5" y2="601" stroke="#333" stroke-width="1"/>
<line x1="296.5" y1="374" x2="296.5" y2="377" stroke="#333" stroke-width="1"/>
<line x1="296.5" y1="598" x2="296.5" y2="601" stroke="#333" stroke-width="1"/>
<line x1="310.5" y1="374" x2="310.5" y2="380" stroke="#333" stroke-width="1"/>
<line x1="310.5" y1="595" x2="310.5" y2="601" stroke="#333" stroke-width="1"/>
<line x1="322.5" y1="374" x2="322.5" y2="377" stroke="#333" stroke-width="1"/>
<line x1="322.5" y1="598" x2="322.5" y2="601" stroke="#333" stroke-width="1"/>
<line x1="331.5" y1="374" x2="331.5" y2="377" stroke="#333" stroke-width="1"/>
<line x1="331.5" y1="598" x2="331.5" y2="601" stroke="#333" stroke-width="1"/>
<line x1="340.5" y1="374" x2="340.5" y2="377" stroke="#333" stroke-width="1"/>
<line x1="340.5" y1="598" x2="340.5" y2="601" stroke="#333" stroke-width="1"/>
<line x1="347.5" y1="374" x2="347.5" y2="377" stroke="#333" stroke-width="1"/>
<line x1="347.5" y1="598" x2="347.5" y2="601" stroke="#333" stroke-width="1"/>
<line x1="397.5" y1="374" x2="397.5" y2="377" stroke="#333" stroke-width="1"/>
<line x1="397.5" y1="598" x2="397.5" y2="601" stroke="#333" stroke-width="1"/>
<line x1="422.5" y1="374" x2="422.5" y2="377" stroke="#333" stroke-width="1"/>
<line x1="422.5" y1="598" x2="422.5" y2="601" stroke="#333" stroke-width="1"/>
<line x1="440.5" y1="374" x2="440.5" y2="377" stroke="#333" stroke-width="1"/>
<line x1="440.5" y1="598" x2="440.5" y2="601" stroke="#333" stroke-width="1"/>
<line x1="454.5" y1="374" x2="454.5" y2="380" stroke="#333" stroke-width="1"/>
<line x1="454.5" y1="595" x2="454.5" y2="601" stroke="#333" stroke-width="1"/>
<line x1="466.5" y1="374" x2="466.5" y2="377" stroke="#333" stroke-width="1"/>
<line x1="466.5" y1="598" x2="466.5" y2="601" stroke="#333" stroke-width="1"/>
<line x1="475.5" y1="374" x2="475.5" y2="377" stroke="#333" stroke-width="1"/>
<line x1="475.5" y1="598" x2="475.5" y2="601" stroke="#333" stroke-width="1"/>
<line x1="484.5" y1="374" x2="484.5" y2="377" stroke="#333" stroke-width="1"/>
<line x1="484.5" y1="598" x2="484.5" y2="601" stroke="#333" stroke-width="1"/>
<line x1="491.5" y1="374" x2="491.5" y2="377" stroke="#333" stroke-width="1"/>
<line x1="491.5" y1="598" x2="491.5" y2="601" stroke="#333" stroke-width="1"/>
<line x1="541.5" y1="374" x2="541.5" y2="377" stroke="#333" stroke-width="1"/>
<line x1="541.5" y1="598" x2="541.5" y2="601" stroke="#333" stroke-width="1"/>
<line x1="566.5" y1="374" x2="566.5" y2="377" stroke="#333" stroke-width="1"/>
<line x1="566.5" y1="598" x2="566.5" y2="601" stroke="#333" stroke-width="1"/>
<line x1="584.5" y1="374" x2="584.5" y2="377" stroke="#333" stroke-width="1"/>
<line x1="584.5" y1="598" x2="584.5" y2="601" stroke="#333" stroke-width="1"/>
<line x1="598.5" y1="374" x2="598.5" y2="380" stroke="#333" stroke-width="1"/>
<line x1="598.5" y1="595" x2="598.5" y2="601" stroke="#333" stroke-width="1"/>
<line x1="610.5" y1="374" x2="610.5" y2="377" stroke="#333" stroke-width="1"/>
<line x1="610.5" y1="598" x2="610.5" y2="601" stroke="#333" stroke-width="1"/>
<line x1="619.5" y1="374" x2="619.5" y2="377" stroke="#333" stroke-width="1"/>
<line x1="619.5" y1="598" x2="619.5" y2="601" stroke="#333" stroke-width="1"/>
<line x1="628.5" y1="374" x2="628.5" y2="377" stroke="#333" stroke-width="1"/>
<line x1="628.5" y1="598" x2="628.5" y2="601" stroke="#333" stroke-width="1"/>
<line x1="635.5" y1="374" x2="635.5" y2="377" stroke="#333" stroke-width="1"/>
<line x1="635.5" y1="598" x2="635.5" y2="601" stroke="#333" stroke-width="1"/>
<line x1="685.5" y1="374" x2="685.5" y2="377" stroke="#333" stroke-width="1"/>
<line x1="685.5" y1="598" x2="685.5" y2="601" stroke="#333" stroke-width="1"/>
<line x1="710.5" y1="374" x2="710.5" y2="377" stroke="#333" stroke-width="1"/>
<line x1="710.5" y1="598" x2="710.5" y2="601" stroke="#333" stroke-width="1"/>
<line x1="728.5" y1="374" x2="728.5" y2="377" stroke="#333" stroke-width="1"/>
<line x1="728.5" y1="598" x2="728.5" y2="601" stroke="#333" stroke-width="1"/>
<line x1="742.5" y1="374" x2="742.5" y2="380" stroke="#333" stroke-width="1"/>
<line x1="742.5" y1="595" x2="742.5" y2="601" stroke="#333" stroke-width="1"/>
<line x1="754.5" y1="374" x2="754.5" y2="377" stroke="#333" stroke-width="1"/>
<line x1="754.5" y1="598" x2="754.5" y2="601" stroke="#333" stroke-width="1"/>
<line x1="763.5" y1="374" x2="763.5" y2="377" stroke="#333" stroke-width="1"/>
<line x1="763.5" y1="598" x2="763.5" y2="601" stroke="#333" stroke-width="1"/>
<line x1="772.5" y1="374" x2="772.5" y2="377" stroke="#333" stroke-width="1"/>
<line x1="772.5" y1="598" x2="772.5" y2="601" stroke="#333" stroke-width="1"/>
<line x1="779.5" y1="374" x2="779.5" y2="377" stroke="#333" stroke-width="1"/>
<line x1="779.5" y1="598" x2="779.5" y2="601" stroke="#333" stroke-width="1"/>
<line x1="66" y1="384.5" x2="68" y2="384.5" stroke="#333" stroke-width="1"/>
<line x1="784" y1="384.5" x2="786" y2="384.5" stroke="#333" stroke-width="1"/>
<line x1="66" y1="407.5" x2="68" y2="407.5" stroke="#333" stroke-width="1"/>
<line x1="784" y1="407.5" x2="786" y2="407.5" stroke="#333" stroke-width="1"/>
<line x1="66" y1="429.5" x2="68" y2="429.5" stroke="#333" stroke-width="1"/>
<line x1="784" y1="429.5" x2="786" y2="429.5" stroke="#333" stroke-width="1"/>
<line x1="66" y1="452.5" x2="68" y2="452.5" stroke="#333" stroke-width="1"/>
<line x1="784" y1="452.5" x2="786" y2="452.5" stroke="#333" stroke-width="1"/>
<line x1="66" y1="475.5" x2="68" y2="475.5" stroke="#333" stroke-width="1"/>
<line x1="784" y1="475.5" x2="786" y2="475.5" stroke="#333" stroke-width="1"/>
<line x1="66" y1="498.5" x2="68" y2="498.5" stroke="#333" stroke-width="1"/>
<line x1="784" y1="498.5" x2="786" y2="498.5" stroke="#333" stroke-width="1"/>
<line x1="66" y1="520.5" x2="68" y2="520.5" stroke="#333" stroke-width="1"/>
<line x1="784" y1="520.5" x2="786" y2="520.5" stroke="#333" stroke-width="1"/>
<line x1="66" y1="543.5" x2="68" y2="543.5" stroke="#333" stroke-width="1"/>
<line x1="784" y1="543.5" x2="786" y2="543.5" stroke="#333" stroke-width="1"/>
<line x1="66" y1="566.5" x2="68" y2="566.5" stroke="#333" stroke-width="1"/>
<line x1="784" y1="566.5" x2="786" y2="566.5" stroke="#333" stroke-width="1"/>
<line x1="66" y1="589.5" x2="68" y2="589.5" stroke="#333" stroke-width="1"/>
<line x1="784" y1="589.5" x2="786" y2="589.5" stroke="#333" stroke-width="1"/>
</g>
<rect x="66" y="137" width="720" height="1.2" fill="#303030"/>
<rect x="66" y="600.3" width="721" height="1.5" fill="#505050"/>
<rect x="124" y="174" width="317" height="177" fill="#FFFFFF"/>
<rect x="424" y="261" width="240" height="53" fill="#FFFFFF"/>
<clipPath id="mclip"><rect x="66" y="137" width="721" height="232"/></clipPath>
<polyline clip-path="url(#mclip)" fill="none" stroke="#2626A8" stroke-width="2.3" points="66.0,161.36 67.8,161.36 69.6,161.36 71.4,161.36 73.2,161.36 75.0,161.36 76.8,161.36 78.6,161.36 80.4,161.36 82.2,161.36 84.0,161.36 85.8,161.36 87.6,161.36 89.4,161.36 91.2,161.36 93.0,161.36 94.8,161.36 96.6,161.36 98.4,161.36 100.2,161.36 102.0,161.36 103.8,161.36 105.6,161.36 107.4,161.36 109.2,161.36 111.0,161.36 112.8,161.36 114.6,161.36 116.4,161.36 118.2,161.36 120.0,161.36 121.8,161.36 123.6,161.36 125.4,161.36 127.2,161.36 129.0,161.36 130.8,161.36 132.6,161.36 134.4,161.36 136.2,161.36 138.0,161.36 139.8,161.36 141.6,161.36 143.4,161.36 145.2,161.36 147.0,161.36 148.8,161.36 150.6,161.36 152.4,161.36 154.2,161.36 156.0,161.36 157.8,161.36 159.6,161.36 161.4,161.36 163.2,161.36 165.0,161.36 166.8,161.36 168.6,161.36 170.4,161.36 172.2,161.36 174.0,161.36 175.8,161.36 177.6,161.36 179.4,161.36 181.2,161.36 183.0,161.36 184.8,161.36 186.6,161.36 188.4,161.36 190.2,161.36 192.0,161.36 193.8,161.36 195.6,161.36 197.4,161.36 199.2,161.36 201.0,161.36 202.8,161.36 204.6,161.36 206.4,161.36 208.2,161.36 210.0,161.36 211.8,161.36 213.6,161.36 215.4,161.36 217.2,161.36 219.0,161.36 220.8,161.36 222.6,161.36 224.4,161.36 226.2,161.36 228.0,161.36 229.8,161.36 231.6,161.36 233.4,161.36 235.2,161.36 237.0,161.36 238.8,161.36 240.6,161.36 242.4,161.36 244.2,161.36 246.0,161.36 247.8,161.36 249.6,161.36 251.4,161.36 253.2,161.36 255.0,161.36 256.8,161.36 258.6,161.36 260.4,161.36 262.2,161.36 264.0,161.36 265.8,161.36 267.6,161.36 269.4,161.36 271.2,161.36 273.0,161.36 274.8,161.36 276.6,161.36 278.4,161.36 280.2,161.36 282.0,161.36 283.8,161.36 285.6,161.36 287.4,161.36 289.2,161.36 291.0,161.36 292.8,161.36 294.6,161.36 296.4,161.36 298.2,161.36 300.0,161.36 301.8,161.36 303.6,161.36 305.4,161.36 307.2,161.36 309.0,161.36 310.8,161.36 312.6,161.36 314.4,161.36 316.2,161.36 318.0,161.36 319.8,161.36 321.6,161.36 323.4,161.36 325.2,161.36 327.0,161.36 328.8,161.36 330.6,161.36 332.4,161.36 334.2,161.36 336.0,161.36 337.8,161.36 339.6,161.36 341.4,161.36 343.2,161.36 345.0,161.36 346.8,161.36 348.6,161.36 350.4,161.36 352.2,161.36 354.0,161.36 355.8,161.36 357.6,161.36 359.4,161.36 361.2,161.36 363.0,161.36 364.8,161.36 366.6,161.36 368.4,161.36 370.2,161.36 372.0,161.36 373.8,161.36 375.6,161.36 377.4,161.36 379.2,161.36 381.0,161.36 382.8,161.36 384.6,161.36 386.4,161.36 388.2,161.36 390.0,161.36 391.8,161.36 393.6,161.36 395.4,161.36 397.2,161.36 399.0,161.36 400.8,161.36 402.6,161.36 404.4,161.36 406.2,161.36 408.0,161.36 409.8,161.36 411.6,161.36 413.4,161.36 415.2,161.36 417.0,161.36 418.8,161.36 420.6,161.36 422.4,161.36 424.2,161.36 426.0,161.36 427.8,161.36 429.6,161.36 431.4,161.36 433.2,161.36 435.0,161.36 436.8,161.36 438.6,161.36 440.4,161.36 442.2,161.37 444.0,161.37 445.8,161.37 447.6,161.37 449.4,161.37 451.2,161.37 453.0,161.37 454.8,161.37 456.6,161.37 458.4,161.37 460.2,161.37 462.0,161.37 463.8,161.37 465.6,161.37 467.4,161.37 469.2,161.37 471.0,161.37 472.8,161.37 474.6,161.37 476.4,161.38 478.2,161.38 480.0,161.38 481.8,161.38 483.6,161.38 485.4,161.38 487.2,161.38 489.0,161.38 490.8,161.39 492.6,161.39 494.4,161.39 496.2,161.39 498.0,161.39 499.8,161.39 501.6,161.40 503.4,161.40 505.2,161.40 507.0,161.40 508.8,161.41 510.6,161.41 512.4,161.41 514.2,161.42 516.0,161.42 517.8,161.43 519.6,161.43 521.4,161.44 523.2,161.44 525.0,161.45 526.8,161.45 528.6,161.46 530.4,161.47 532.2,161.48 534.0,161.48 535.8,161.49 537.6,161.50 539.4,161.52 541.2,161.53 543.0,161.54 544.8,161.55 546.6,161.57 548.4,161.59 550.2,161.61 552.0,161.63 553.8,161.65 555.6,161.67 557.4,161.70 559.2,161.73 561.0,161.76 562.8,161.79 564.6,161.83 566.4,161.87 568.2,161.92 570.0,161.97 571.8,162.02 573.6,162.08 575.4,162.15 577.2,162.22 579.0,162.30 580.8,162.39 582.6,162.49 584.4,162.60 586.2,162.72 588.0,162.85 589.8,162.99 591.6,163.15 593.4,163.33 595.2,163.52 597.0,163.74 598.8,163.97 600.6,164.23 602.4,164.52 604.2,164.84 606.0,165.18 607.8,165.56 609.6,165.98 611.4,166.43 613.2,166.93 615.0,167.48 616.8,168.07 618.6,168.72 620.4,169.42 622.2,170.18 624.0,171.01 625.8,171.90 627.6,172.86 629.4,173.89 631.2,174.99 633.0,176.17 634.8,177.43 636.6,178.76 638.4,180.17 640.2,181.67 642.0,183.24 643.8,184.89 645.6,186.61 647.4,188.41 649.2,190.28 651.0,192.23 652.8,194.24 654.6,196.32 656.4,198.45 658.2,200.65 660.0,202.90 661.8,205.21 663.6,207.56 665.4,209.96 667.2,212.41 669.0,214.89 670.8,217.41 672.6,219.96 674.4,222.54 676.2,225.15 678.0,227.79 679.8,230.45 681.6,233.14 683.4,235.85 685.2,238.57 687.0,241.31 688.8,244.07 690.6,246.84 692.4,249.63 694.2,252.42 696.0,255.23 697.8,258.05 699.6,260.88 701.4,263.72 703.2,266.57 705.0,269.43 706.8,272.29 708.6,275.17 710.4,278.05 712.2,280.93 714.0,283.83 715.8,286.73 717.6,289.63 719.4,292.54 721.2,295.46 723.0,298.39 724.8,301.32 726.6,304.26 728.4,307.20 730.2,310.15 732.0,313.11 733.8,316.08 735.6,319.05 737.4,322.03 739.2,325.01 741.0,328.01 742.8,331.01 744.6,334.02 746.4,337.03 748.2,340.06 750.0,343.10 751.8,346.14 753.6,349.20 755.4,352.26 757.2,355.34 759.0,358.43 760.8,361.52 762.6,364.63 764.4,367.75 766.2,370.89 768.0,374.04 769.8,377.20 771.6,380.37 773.4,383.56 775.2,386.76 777.0,389.98 778.8,393.22 780.6,396.47 782.4,399.74 784.2,403.02 786.0,406.32"/>
<polyline fill="none" stroke="#2626A8" stroke-width="2.3" stroke-linejoin="round" points="66.0,413.13 67.8,413.30 69.6,413.46 71.4,413.62 73.2,413.77 75.0,413.92 76.8,414.06 78.6,414.21 80.4,414.34 82.2,414.48 84.0,414.61 85.8,414.73 87.6,414.85 89.4,414.97 91.2,415.09 93.0,415.20 94.8,415.31 96.6,415.42 98.4,415.52 100.2,415.62 102.0,415.72 103.8,415.82 105.6,415.91 107.4,416.00 109.2,416.09 111.0,416.17 112.8,416.26 114.6,416.34 116.4,416.41 118.2,416.49 120.0,416.56 121.8,416.64 123.6,416.71 125.4,416.77 127.2,416.84 129.0,416.90 130.8,416.97 132.6,417.03 134.4,417.09 136.2,417.14 138.0,417.20 139.8,417.25 141.6,417.31 143.4,417.36 145.2,417.41 147.0,417.46 148.8,417.50 150.6,417.55 152.4,417.59 154.2,417.64 156.0,417.68 157.8,417.72 159.6,417.76 161.4,417.80 163.2,417.84 165.0,417.87 166.8,417.91 168.6,417.94 170.4,417.98 172.2,418.01 174.0,418.04 175.8,418.07 177.6,418.10 179.4,418.13 181.2,418.16 183.0,418.19 184.8,418.22 186.6,418.25 188.4,418.27 190.2,418.30 192.0,418.32 193.8,418.34 195.6,418.37 197.4,418.39 199.2,418.41 201.0,418.43 202.8,418.46 204.6,418.48 206.4,418.50 208.2,418.52 210.0,418.54 211.8,418.55 213.6,418.57 215.4,418.59 217.2,418.61 219.0,418.62 220.8,418.64 222.6,418.66 224.4,418.67 226.2,418.69 228.0,418.70 229.8,418.72 231.6,418.73 233.4,418.75 235.2,418.76 237.0,418.78 238.8,418.79 240.6,418.80 242.4,418.82 244.2,418.83 246.0,418.84 247.8,418.85 249.6,418.87 251.4,418.88 253.2,418.89 255.0,418.90 256.8,418.91 258.6,418.93 260.4,418.94 262.2,418.95 264.0,418.96 265.8,418.97 267.6,418.98 269.4,418.99 271.2,419.00 273.0,419.01 274.8,419.02 276.6,419.04 278.4,419.05 280.2,419.06 282.0,419.07 283.8,419.08 285.6,419.09 287.4,419.10 289.2,419.11 291.0,419.12 292.8,419.13 294.6,419.14 296.4,419.15 298.2,419.16 300.0,419.17 301.8,419.18 303.6,419.20 305.4,419.21 307.2,419.22 309.0,419.23 310.8,419.24 312.6,419.25 314.4,419.26 316.2,419.28 318.0,419.29 319.8,419.30 321.6,419.31 323.4,419.32 325.2,419.34 327.0,419.35 328.8,419.36 330.6,419.38 332.4,419.39 334.2,419.41 336.0,419.42 337.8,419.43 339.6,419.45 341.4,419.46 343.2,419.48 345.0,419.50 346.8,419.51 348.6,419.53 350.4,419.54 352.2,419.56 354.0,419.58 355.8,419.60 357.6,419.62 359.4,419.63 361.2,419.65 363.0,419.67 364.8,419.69 366.6,419.72 368.4,419.74 370.2,419.76 372.0,419.78 373.8,419.80 375.6,419.83 377.4,419.85 379.2,419.88 381.0,419.90 382.8,419.93 384.6,419.96 386.4,419.98 388.2,420.01 390.0,420.04 391.8,420.07 393.6,420.10 395.4,420.13 397.2,420.17 399.0,420.20 400.8,420.23 402.6,420.27 404.4,420.31 406.2,420.34 408.0,420.38 409.8,420.42 411.6,420.46 413.4,420.50 415.2,420.55 417.0,420.59 418.8,420.64 420.6,420.68 422.4,420.73 424.2,420.78 426.0,420.83 427.8,420.88 429.6,420.94 431.4,420.99 433.2,421.05 435.0,421.11 436.8,421.17 438.6,421.23 440.4,421.29 442.2,421.36 444.0,421.43 445.8,421.50 447.6,421.57 449.4,421.64 451.2,421.72 453.0,421.79 454.8,421.87 456.6,421.96 458.4,422.04 460.2,422.13 462.0,422.22 463.8,422.31 465.6,422.41 467.4,422.50 469.2,422.61 471.0,422.71 472.8,422.82 474.6,422.93 476.4,423.04 478.2,423.16 480.0,423.28 481.8,423.40 483.6,423.53 485.4,423.66 487.2,423.79 489.0,423.93 490.8,424.07 492.6,424.22 494.4,424.37 496.2,424.53 498.0,424.69 499.8,424.86 501.6,425.03 503.4,425.20 505.2,425.38 507.0,425.57 508.8,425.76 510.6,425.96 512.4,426.16 514.2,426.37 516.0,426.59 517.8,426.81 519.6,427.04 521.4,427.28 523.2,427.52 525.0,427.77 526.8,428.03 528.6,428.30 530.4,428.57 532.2,428.85 534.0,429.15 535.8,429.45 537.6,429.76 539.4,430.08 541.2,430.41 543.0,430.75 544.8,431.10 546.6,431.47 548.4,431.84 550.2,432.23 552.0,432.63 553.8,433.04 555.6,433.46 557.4,433.90 559.2,434.36 561.0,434.83 562.8,435.31 564.6,435.81 566.4,436.33 568.2,436.86 570.0,437.42 571.8,437.99 573.6,438.58 575.4,439.19 577.2,439.82 579.0,440.48 580.8,441.15 582.6,441.85 584.4,442.58 586.2,443.32 588.0,444.10 589.8,444.90 591.6,445.73 593.4,446.59 595.2,447.47 597.0,448.39 598.8,449.33 600.6,450.31 602.4,451.32 604.2,452.37 606.0,453.44 607.8,454.55 609.6,455.69 611.4,456.86 613.2,458.07 615.0,459.31 616.8,460.58 618.6,461.88 620.4,463.20 622.2,464.56 624.0,465.94 625.8,467.34 627.6,468.76 629.4,470.20 631.2,471.65 633.0,473.11 634.8,474.58 636.6,476.06 638.4,477.53 640.2,479.00 642.0,480.46 643.8,481.91 645.6,483.34 647.4,484.76 649.2,486.16 651.0,487.53 652.8,488.88 654.6,490.21 656.4,491.50 658.2,492.77 660.0,494.00 661.8,495.20 663.6,496.37 665.4,497.50 667.2,498.61 669.0,499.68 670.8,500.71 672.6,501.72 674.4,502.69 676.2,503.63 678.0,504.54 679.8,505.42 681.6,506.28 683.4,507.10 685.2,507.90 687.0,508.67 688.8,509.41 690.6,510.13 692.4,510.82 694.2,511.50 696.0,512.15 697.8,512.77 699.6,513.38 701.4,513.97 703.2,514.54 705.0,515.09 706.8,515.62 708.6,516.13 710.4,516.63 712.2,517.11 714.0,517.58 715.8,518.03 717.6,518.47 719.4,518.89 721.2,519.30 723.0,519.70 724.8,520.08 726.6,520.45 728.4,520.82 730.2,521.17 732.0,521.50 733.8,521.83 735.6,522.15 737.4,522.46 739.2,522.76 742.1,522.20 747.6,523.60 754.3,524.90 758.7,523.80 763.1,525.50 767.6,524.90 770.9,525.50 775.3,529.10 779.2,527.70 782.5,528.30 785.8,529.60"/>
<rect x="68" y="151" width="18" height="2" fill="#1E1E78"/>
<text x="89.00" y="155.8" font-size="12" font-weight="bold" fill="#3434AC" textLength="174.81" lengthAdjust="spacing" >Channel 2 (relative to Channel 1)</text>
<circle cx="148" cy="287" r="11.5" fill="none" stroke="#2A2A9C" stroke-width="1.3"/>
<polyline fill="none" stroke="#2A2A9C" stroke-width="1.2" points="148,275.5 148,263.5 163,263.5"/>
<polyline fill="none" stroke="#2E7A2E" stroke-width="1.2" points="148,263.5 163,263.5"/>
<polyline fill="none" stroke="#2A2A9C" stroke-width="1.2" points="148,298.5 148,323"/>
<polyline fill="none" stroke="#2A2A9C" stroke-width="1.2" points="140,323 156.5,323"/>
<polyline fill="none" stroke="#2A2A9C" stroke-width="1.2" points="144,329.5 153,329.5"/>
<polyline fill="none" stroke="#2A2A9C" stroke-width="1.1" points="138.8,270 144.3,270"/>
<polyline fill="none" stroke="#2A2A9C" stroke-width="1.1" points="141.5,267.3 141.5,272.7"/>
<polyline fill="none" stroke="#2A2A9C" stroke-width="1.1" points="138.8,304.5 143.6,304.5"/>
<text x="161.80" y="295.5" font-size="12" fill="#2E7A2E" textLength="12.28" lengthAdjust="spacing" >Vi</text>
<polyline fill="none" stroke="#2A2A9C" stroke-width="1.2" points="163,263.5 176,263.5"/>
<polyline fill="none" stroke="#2A2A9C" stroke-width="1.2" points="176,263.5 178,260 182,267.5 186,260 190,267.5 194,260 198,267.5 200,263.5"/>
<polyline fill="none" stroke="#2A2A9C" stroke-width="1.2" points="200,263.5 210,263.5"/>
<polyline fill="none" stroke="#2E7A2E" stroke-width="1.2" points="210,263.5 220.5,263.5"/>
<text x="169.50" y="240" font-size="12" fill="#2E7A2E" textLength="34.50" lengthAdjust="spacing" >1.25k</text>
<text x="177.30" y="255" font-size="12" fill="#2E7A2E" textLength="16.92" lengthAdjust="spacing" >R1</text>
<polyline fill="none" stroke="#2E7A2E" stroke-width="1.2" points="220.5,263.5 220.5,215.5 300,215.5"/>
<polyline fill="none" stroke="#2A2A9C" stroke-width="1.2" points="300,215.5 322,215.5"/>
<polyline fill="none" stroke="#2A2A9C" stroke-width="1.5" points="322.5,207.5 322.5,223"/>
<polyline fill="none" stroke="#2A2A9C" stroke-width="1.5" points="326.5,207.5 326.5,223"/>
<polyline fill="none" stroke="#2A2A9C" stroke-width="1.2" points="326.5,215.5 349.5,215.5"/>
<polyline fill="none" stroke="#2E7A2E" stroke-width="1.2" points="349.5,215.5 412.5,215.5 412.5,287.5"/>
<text x="303.80" y="187" font-size="12" fill="#2E7A2E" textLength="48.19" lengthAdjust="spacing" >2000pF</text>
<text x="316.80" y="201" font-size="12" fill="#2E7A2E" textLength="16.22" lengthAdjust="spacing" >C1</text>
<polyline fill="none" stroke="#2A2A9C" stroke-width="1.2" points="220.5,263.5 240,263.5 242,260 246,267.5 250,260 254,267.5 258,260 262,267.5 264,263.5 277.5,263.5"/>
<polyline fill="none" stroke="#2E7A2E" stroke-width="1.2" points="277.5,263.5 316,263.5"/>
<polyline fill="none" stroke="#2A2A9C" stroke-width="1.2" points="316,263.5 322.5,263.5"/>
<text x="228.40" y="239" font-size="12" fill="#2E7A2E" textLength="34.70" lengthAdjust="spacing" >1.25k</text>
<text x="241.50" y="255" font-size="12" fill="#2E7A2E" textLength="15.72" lengthAdjust="spacing" >R2</text>
<polyline fill="none" stroke="#2A2A9C" stroke-width="1.2" points="292.5,263.5 292.5,285"/>
<polyline fill="none" stroke="#2A2A9C" stroke-width="1.5" points="284,285 301,285"/>
<polyline fill="none" stroke="#2A2A9C" stroke-width="1.5" points="284,289.5 301,289.5"/>
<polyline fill="none" stroke="#2A2A9C" stroke-width="1.2" points="292.5,289.5 292.5,324"/>
<polyline fill="none" stroke="#2A2A9C" stroke-width="1.2" points="284,324 301,324"/>
<polyline fill="none" stroke="#2A2A9C" stroke-width="1.2" points="287.5,329.5 297.5,329.5"/>
<text x="238.30" y="286" font-size="12" fill="#2E7A2E" textLength="48.39" lengthAdjust="spacing" >1000pF</text>
<text x="258.00" y="302" font-size="12" fill="#2E7A2E" textLength="15.72" lengthAdjust="spacing" >C2</text>
<path d="M322.5 259.5 L364.5 287.5 L322.5 315 Z" fill="none" stroke="#2A2A9C" stroke-width="1.3"/>
<polyline fill="none" stroke="#2A2A9C" stroke-width="1.1" points="325.8,275 330.9,275"/>
<polyline fill="none" stroke="#2A2A9C" stroke-width="1.1" points="328.3,272.5 328.3,277.6"/>
<polyline fill="none" stroke="#2A2A9C" stroke-width="1.1" points="325.8,298.5 330.9,298.5"/>
<polyline fill="none" stroke="#2A2A9C" stroke-width="1.2" points="348.5,276 348.5,255"/>
<polyline fill="none" stroke="#2A2A9C" stroke-width="1.2" points="348.5,298.5 348.5,319"/>
<polyline fill="none" stroke="#2A2A9C" stroke-width="1.1" points="338.8,259.5 343.9,259.5"/>
<polyline fill="none" stroke="#2A2A9C" stroke-width="1.1" points="341.3,257 341.3,262"/>
<polyline fill="none" stroke="#2A2A9C" stroke-width="1.1" points="338.8,315.5 343.5,315.5"/>
<text x="347.00" y="252.5" font-size="12" fill="#B83030" textLength="18.17" lengthAdjust="spacing" >VC</text>
<text x="347.00" y="316.5" font-size="12" fill="#B83030" >VE</text>
<text x="355.20" y="277.8" font-size="12" fill="#2E7A2E" textLength="49.30" lengthAdjust="spacing" >NE5534</text>
<polyline fill="none" stroke="#2A2A9C" stroke-width="1.2" points="364.5,287.5 389.5,287.5"/>
<polyline fill="none" stroke="#2E7A2E" stroke-width="1.2" points="389.5,287.5 423.5,287.5"/>
<polyline fill="none" stroke="#2A2A9C" stroke-width="1.2" points="322.5,312 316,312"/>
<polyline fill="none" stroke="#2E7A2E" stroke-width="1.2" points="316,312 316,343.5 412.5,343.5 412.5,287.5"/>
<circle cx="220.5" cy="263.5" r="2.6" fill="#D42020"/>
<circle cx="292.5" cy="263.5" r="2.6" fill="#D42020"/>
<circle cx="348.5" cy="255" r="2.6" fill="#D42020"/>
<circle cx="348.5" cy="319" r="2.6" fill="#D42020"/>
<circle cx="412.5" cy="287.5" r="2.6" fill="#D42020"/>
<text x="429.30" y="283.5" font-size="18.3" fill="#000" textLength="227.16" lengthAdjust="spacing" >2nd order Butterworth Filter</text>
<text x="429.00" y="304.8" font-size="18.3" fill="#000" textLength="87.36" lengthAdjust="spacing" >F0=90kHz</text>
<text x="529.70" y="304.8" font-size="18.3" fill="#000" textLength="121.74" lengthAdjust="spacing" >NBW=100kHz</text>
<rect x="66" y="368" width="720" height="1.2" fill="#7A7A7A"/>
<rect x="6" y="369.7" width="801" height="4.4" fill="#0C52D8"/>
<text transform="translate(793.5,214.5) rotate(90)" font-size="12" font-weight="bold" fill="#000" textLength="80" lengthAdjust="spacingAndGlyphs">Magnitude(dB)</text>
<text transform="translate(793.5,446) rotate(90)" font-size="12" font-weight="bold" fill="#000" textLength="87" lengthAdjust="spacingAndGlyphs">Phase(degrees)</text>
<rect x="6.5" y="602.5" width="19" height="19" fill="#FFFFFF" stroke="#000" stroke-width="1.2"/>
<path d="M12.6 608.3 L19.6 615.1 M19.6 608.3 L12.6 615.1" stroke="#000" stroke-width="2" stroke-linecap="round"/>
<rect x="807" y="114" width="2" height="512" fill="#1C4A9A"/>
<rect x="809" y="30" width="1" height="622" fill="#0A50E0"/>
<rect x="810" y="30" width="1" height="622" fill="#0A48D8"/>
<rect x="811" y="30" width="1" height="622" fill="#0020B0"/>
<rect x="812" y="30" width="1" height="622" fill="#0010A0"/>
<rect x="4" y="624" width="805" height="2" fill="#0A40A0"/>
<rect x="4" y="626" width="805" height="22" fill="url(#sb)"/>
<rect x="4" y="647" width="805" height="1" fill="#F0F4F8"/>
<text x="7" y="642" font-size="11" fill="#000">Ready</text>
<rect x="804" y="635" width="2" height="2" fill="#A8A498"/>
<rect x="800" y="639" width="2" height="2" fill="#A8A498"/>
<rect x="804" y="639" width="2" height="2" fill="#A8A498"/>
<rect x="796" y="643" width="2" height="2" fill="#A8A498"/>
<rect x="800" y="643" width="2" height="2" fill="#A8A498"/>
<rect x="804" y="643" width="2" height="2" fill="#A8A498"/>
</svg></body></html>
